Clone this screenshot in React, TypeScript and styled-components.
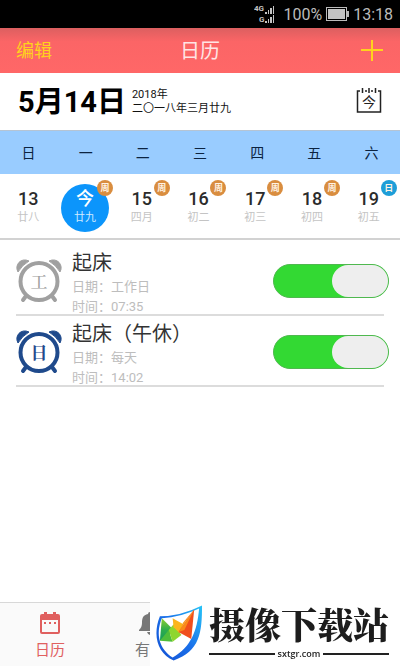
import React, { useState } from "react";
import styled, { createGlobalStyle } from "styled-components";

const GlobalStyle = createGlobalStyle`
  * { box-sizing: border-box; }
  body {
    margin: 0;
    background: #fff;
    font-family: Roboto, "Noto Sans CJK SC", sans-serif;
    color: #333;
  }
  button { border: 0; padding: 0; background: none; font: inherit; color: inherit; cursor: pointer; }
`;

const Screen = styled.div`
  min-height: 100vh;
  display: flex;
  flex-direction: column;
`;

const StatusBar = styled.div`
  height: 28px;
  padding: 0 7px;
  background: #000;
  color: #bbb;
  display: flex;
  align-items: center;
  justify-content: flex-end;
  gap: 4px;
  font-size: 16px;
  line-height: 28px;
`;

const Signal = styled.svg`
  margin-right: 4px;
`;

const StatusText = styled.span`
  padding-top: 1px;
`;

const Header = styled.header`
  height: 45px;
  padding: 0 16px;
  background: linear-gradient(#dc5f60, #fb6566 30%, #ff6767);
  display: grid;
  grid-template-columns: 1fr auto 1fr;
  align-items: center;
`;

const EditButton = styled.button`
  justify-self: start;
  color: #ffd21c;
  font-size: 18px;
  line-height: 24px;
`;

const AddButton = styled.button`
  justify-self: end;
  height: 24px;
`;

const Title = styled.h1`
  margin: 0;
  color: #ffe4e4;
  font-size: 20px;
  font-weight: 400;
  line-height: 24px;
`;

const DateRow = styled.section`
  height: 57px;
  padding: 0 18px;
  display: flex;
  align-items: center;
  gap: 6px;
`;

const BigDate = styled.div`
  color: #000;
  font-size: 29px;
  font-weight: 700;
  line-height: 32px;
`;

const SubDate = styled.div`
  flex: 1;
  color: #111;
  font-size: 11px;
  line-height: 14px;
`;

const Week = styled.div`
  display: grid;
  grid-template-columns: repeat(7, 1fr);
  height: 44px;
  background: #99ccff;
  border-top: 1px solid #b5c4d4;
  color: #0c2340;
  font-size: 14px;
  line-height: 44px;
  text-align: center;
`;

const Days = styled.div`
  display: grid;
  grid-template-columns: repeat(7, 1fr);
  justify-items: center;
  height: 66px;
  padding: 10px 3px 0 0;
  border-bottom: 2px solid #d2d2d2;
`;

const Day = styled.button<{ $today?: boolean }>`
  position: relative;
  width: 48px;
  height: 48px;
  border-radius: 50%;
  background: ${(p) => (p.$today ? "#0c95fb" : "transparent")};
  color: ${(p) => (p.$today ? "#fff" : "#2b2b2b")};
  display: flex;
  flex-direction: column;
  align-items: center;
  padding-top: 5px;
`;

const DayNumber = styled.span`
  font-size: 18px;
  font-weight: 500;
  line-height: 20px;
`;

const Lunar = styled.span<{ $today?: boolean }>`
  font-size: 11px;
  line-height: 18px;
  color: ${(p) => (p.$today ? "#cfeaff" : "#c4c4c4")};
`;

const Badge = styled.span<{ $rest?: boolean }>`
  position: absolute;
  top: -4px;
  right: -4px;
  width: 16px;
  height: 16px;
  border-radius: 50%;
  background: ${(p) => (p.$rest ? "#1e9ed8" : "#d98d3f")};
  color: #fff3e4;
  font-size: 9px;
  font-weight: 700;
  line-height: 16px;
  text-align: center;
`;

const AlarmList = styled.ul`
  flex: 1;
  list-style: none;
  margin: 0;
  padding: 5px 16px 70px;
`;

const Alarm = styled.li`
  display: flex;
  align-items: flex-start;
  gap: 10px;
  height: 71px;
  padding-top: 4px;
  border-bottom: 2px solid #dcdcdc;
`;

const AlarmText = styled.label`
  flex: 1;
`;

const AlarmName = styled.div`
  font-size: 20px;
  line-height: 28px;
`;

const AlarmMeta = styled.div`
  color: #bdbdbd;
  font-size: 13px;
  line-height: 20px;
`;

const ClockIcon = styled.svg`
  margin-top: 9px;
  flex: none;
  font-family: "Noto Serif CJK SC", "Noto Sans CJK SC", serif;
`;

const Toggle = styled.input`
  appearance: none;
  flex: none;
  width: 116px;
  height: 34px;
  margin: 15px -5px 0 0;
  border: 1px solid #4fb84f;
  border-radius: 17px;
  background: #ccc;
  display: flex;
  cursor: pointer;
  &::before {
    content: "";
    width: 56px;
    border-radius: 16px;
    background: #eee;
  }
  &:checked {
    background: #33d933;
    justify-content: flex-end;
  }
`;

const TabBar = styled.nav`
  position: fixed;
  left: 0;
  right: 0;
  bottom: 0;
  height: 64px;
  border-top: 1px solid #d8d8d8;
  background: #fafafa;
  display: grid;
  grid-template-columns: repeat(4, 1fr);
`;

const Tab = styled.button<{ $active?: boolean }>`
  display: flex;
  flex-direction: column;
  align-items: center;
  justify-content: flex-start;
  padding-top: 8px;
  gap: 5px;
  color: ${(p) => (p.$active ? "#e0605f" : "#777")};
  font-size: 15px;
  line-height: 20px;
`;

const TabLabel = styled.span`
  width: 2em;
  text-align: left;
`;

const SiteMark = styled.aside`
  position: fixed;
  right: 0;
  bottom: 0;
  width: 250px;
  height: 64px;
  padding: 0 11px 0 5px;
  background: #fff;
  display: flex;
  gap: 5px;
`;

const SiteText = styled.div`
  flex: 1;
  display: flex;
  flex-direction: column;
  gap: 4px;
  padding-top: 2px;
`;

const SiteName = styled.div`
  color: #1d1d1d;
  font-family: "Noto Serif CJK SC", "Noto Sans CJK SC", serif;
  font-size: 36px;
  font-weight: 900;
  line-height: 40px;
  white-space: nowrap;
`;

const SiteUrl = styled.div`
  display: flex;
  align-items: center;
  gap: 3px;
  color: #222;
  font-family: "Open Sans", sans-serif;
  font-size: 9px;
  font-weight: 600;
  line-height: 12px;
  &::before, &::after {
    content: "";
    flex: 1;
    height: 2px;
    background: #222;
  }
`;

const days = [
  { n: "13", lunar: "廿八", badge: "" },
  { n: "今", lunar: "廿九", badge: "周" },
  { n: "15", lunar: "四月", badge: "周" },
  { n: "16", lunar: "初二", badge: "周" },
  { n: "17", lunar: "初三", badge: "周" },
  { n: "18", lunar: "初四", badge: "周" },
  { n: "19", lunar: "初五", badge: "日" },
];

const alarms = [
  { id: "morning", name: "起床", date: "工作日", time: "07:35", mark: "工", color: "#a0a0a0", weight: 500 },
  { id: "noon", name: "起床（午休）", date: "每天", time: "14:02", mark: "日", color: "#1f4a8c", weight: 700 },
];

function Clock({ color, mark, weight }: { color: string; mark: string; weight: number }) {
  return (
    <ClockIcon width="46" height="46" viewBox="0 0 46 46" aria-hidden="true">
      <path d="M2 14C-2 7 5 -1 13 3Q6 7 2 14zM44 14C48 7 41 -1 33 3Q40 7 44 14z" fill={color} stroke={color} strokeWidth="1" strokeLinejoin="round" />
      <circle cx="23" cy="23.500" r="18.500" fill="none" stroke={color} strokeWidth="4" />
      <path d="M10 38l-3 4M36 38l3 4" stroke={color} strokeWidth="4" strokeLinecap="round" />
      <text x="23" y="30" textAnchor="middle" fontSize="17" fontWeight={weight} fill={color}>{mark}</text>
    </ClockIcon>
  );
}

export default function App() {
  const [on, setOn] = useState<Record<string, boolean>>({ morning: true, noon: true });
  return (
    <Screen>
      <GlobalStyle />
      <StatusBar>
        <Signal width="21" height="20" viewBox="0 0 21 20" fill="#c4c4c4" aria-hidden="true">
          <text x="0" y="7" fontSize="8" fontWeight="700">4G</text>
          <text x="5" y="18" fontSize="8" fontWeight="700">G</text>
          <path d="M11 8h2v2h-2zM14 6h1v4h-1zM16 4h2v6h-2zM19 2h1v8h-1zM11 17h2v2h-2zM14 15h1v4h-1zM16 13h2v6h-2zM19 11h1v8h-1z" />
        </Signal>
        <StatusText>100%</StatusText>
        <svg width="23" height="14" viewBox="0 0 23 14" aria-hidden="true">
          <rect x="0.5" y="0.5" width="20" height="13" fill="none" stroke="#bbb" />
          <rect x="2" y="2" width="17" height="10" fill="#c4c4c4" />
          <path d="M21 4h2v6h-2z" fill="#bbb" />
        </svg>
        <StatusText>13:18</StatusText>
      </StatusBar>
      <Header>
        <EditButton>编辑</EditButton>
        <Title>日历</Title>
        <AddButton aria-label="添加">
          <svg width="24" height="24" viewBox="0 0 24 24" stroke="#ffd21c" strokeWidth="2" aria-hidden="true">
            <path d="M12 1v21M1 11h22" />
          </svg>
        </AddButton>
      </Header>
      <DateRow>
        <BigDate>5月14日</BigDate>
        <SubDate>
          <div>2018年</div>
          <div>二〇一八年三月廿九</div>
        </SubDate>
        <button aria-label="今天">
          <svg width="26" height="28" viewBox="0 0 26 28" aria-hidden="true">
            <path d="M4 5H1.500v21h23V5H22M9 5h2M15 5h2" fill="none" stroke="#222" strokeWidth="1.500" />
            <path d="M6.500 2v5M13 2v5M19.500 2v5" stroke="#222" strokeWidth="1.500" />
            <text x="13" y="21" textAnchor="middle" fontSize="14" fill="#222">今</text>
          </svg>
        </button>
      </DateRow>
      <Week>
        {["日", "一", "二", "三", "四", "五", "六"].map((d) => <span key={d}>{d}</span>)}
      </Week>
      <Days>
        {days.map((d) => {
          const today = d.n === "今";
          return (
            <Day key={d.n} $today={today}>
              <DayNumber>{d.n}</DayNumber>
              <Lunar $today={today}>{d.lunar}</Lunar>
              {d.badge && <Badge $rest={d.badge === "日"}>{d.badge}</Badge>}
            </Day>
          );
        })}
      </Days>
      <AlarmList>
        {alarms.map((a) => (
          <Alarm key={a.id}>
            <Clock color={a.color} mark={a.mark} weight={a.weight} />
            <AlarmText htmlFor={a.id}>
              <AlarmName>{a.name}</AlarmName>
              <AlarmMeta>日期：{a.date}</AlarmMeta>
              <AlarmMeta>时间：{a.time}</AlarmMeta>
            </AlarmText>
            <Toggle
              id={a.id}
              type="checkbox"
              checked={on[a.id]}
              onChange={(e) => setOn({ ...on, [a.id]: e.target.checked })}
            />
          </Alarm>
        ))}
      </AlarmList>
      <TabBar>
        <Tab $active>
          <svg width="22" height="24" viewBox="0 0 22 24" aria-hidden="true">
            <path d="M3 3h2V1h3v2h6V1h3v2h2q2 0 2 2v16q0 2-2 2H3q-2 0-2-2V5q0-2 2-2zM3 9v12h16V9z" fill="#e0605f" fillRule="evenodd" />
            <path d="M5 11h2v2H5zM10 11h2v2h-2zM15 11h2v2h-2z" fill="#e0605f" />
          </svg>
          <TabLabel>日历</TabLabel>
        </Tab>
        <Tab>
          <svg width="22" height="24" viewBox="0 0 22 24" fill="#777" aria-hidden="true">
            <path d="M11 1q2 0 2 2c5 1 6 4 6 9 0 3 1 5 3 7v1H0v-1c2-2 3-4 3-7 0-5 1-8 6-9q0-2 2-2zM8 21h6q-1 3-3 3t-3-3z" />
          </svg>
          <TabLabel>有</TabLabel>
        </Tab>
      </TabBar>
      <SiteMark>
        <svg width="50" height="64" viewBox="0 0 50 64" aria-hidden="true">
          <defs>
            <linearGradient id="shield" x1="0" y1="1" x2="1" y2="0">
              <stop offset="0" stopColor="#1450d2" />
              <stop offset="0.5" stopColor="#1a70ea" />
              <stop offset="1" stopColor="#27c4f7" />
            </linearGradient>
            <linearGradient id="greenFold" x1="0" y1="0" x2="0" y2="1">
              <stop offset="0" stopColor="#8fcf2e" />
              <stop offset="0.5" stopColor="#2fae4c" />
              <stop offset="1" stopColor="#159a5c" />
            </linearGradient>
            <linearGradient id="orangeFold" x1="0" y1="1" x2="1" y2="0">
              <stop offset="0" stopColor="#fdc01c" />
              <stop offset="1" stopColor="#f2641c" />
            </linearGradient>
          </defs>
          <path d="M5 14Q26 14 48 3C48 30 46 50 19 59C3 52 -3 34 5 14Z" fill="url(#shield)" />
          <path d="M7 16Q26 15 45 6C43 29 37 45 18 56C5 48 0 33 7 16Z" fill="#fff" />
          <path d="M7 16L20 29L5 39Z" fill="url(#greenFold)" />
          <path d="M5 39L14 28L18 40Z" fill="#4fbd3a" />
          <path d="M14 28L19 22L27 33L18 40Z" fill="#8ed62f" />
          <path d="M18 16L29 22L25 31L19 25Z" fill="#fbb51c" />
          <path d="M40 7L23 31L29 20Z" fill="url(#orangeFold)" />
          <path d="M40 7L24 30L37 37Z" fill="#f04e1c" />
          <path d="M40 7L30 28L24 30Z" fill="#f98a1b" />
        </svg>
        <SiteText>
          <SiteName>摄像下载站</SiteName>
          <SiteUrl>sxtgr.com</SiteUrl>
        </SiteText>
      </SiteMark>
    </Screen>
  );
}
